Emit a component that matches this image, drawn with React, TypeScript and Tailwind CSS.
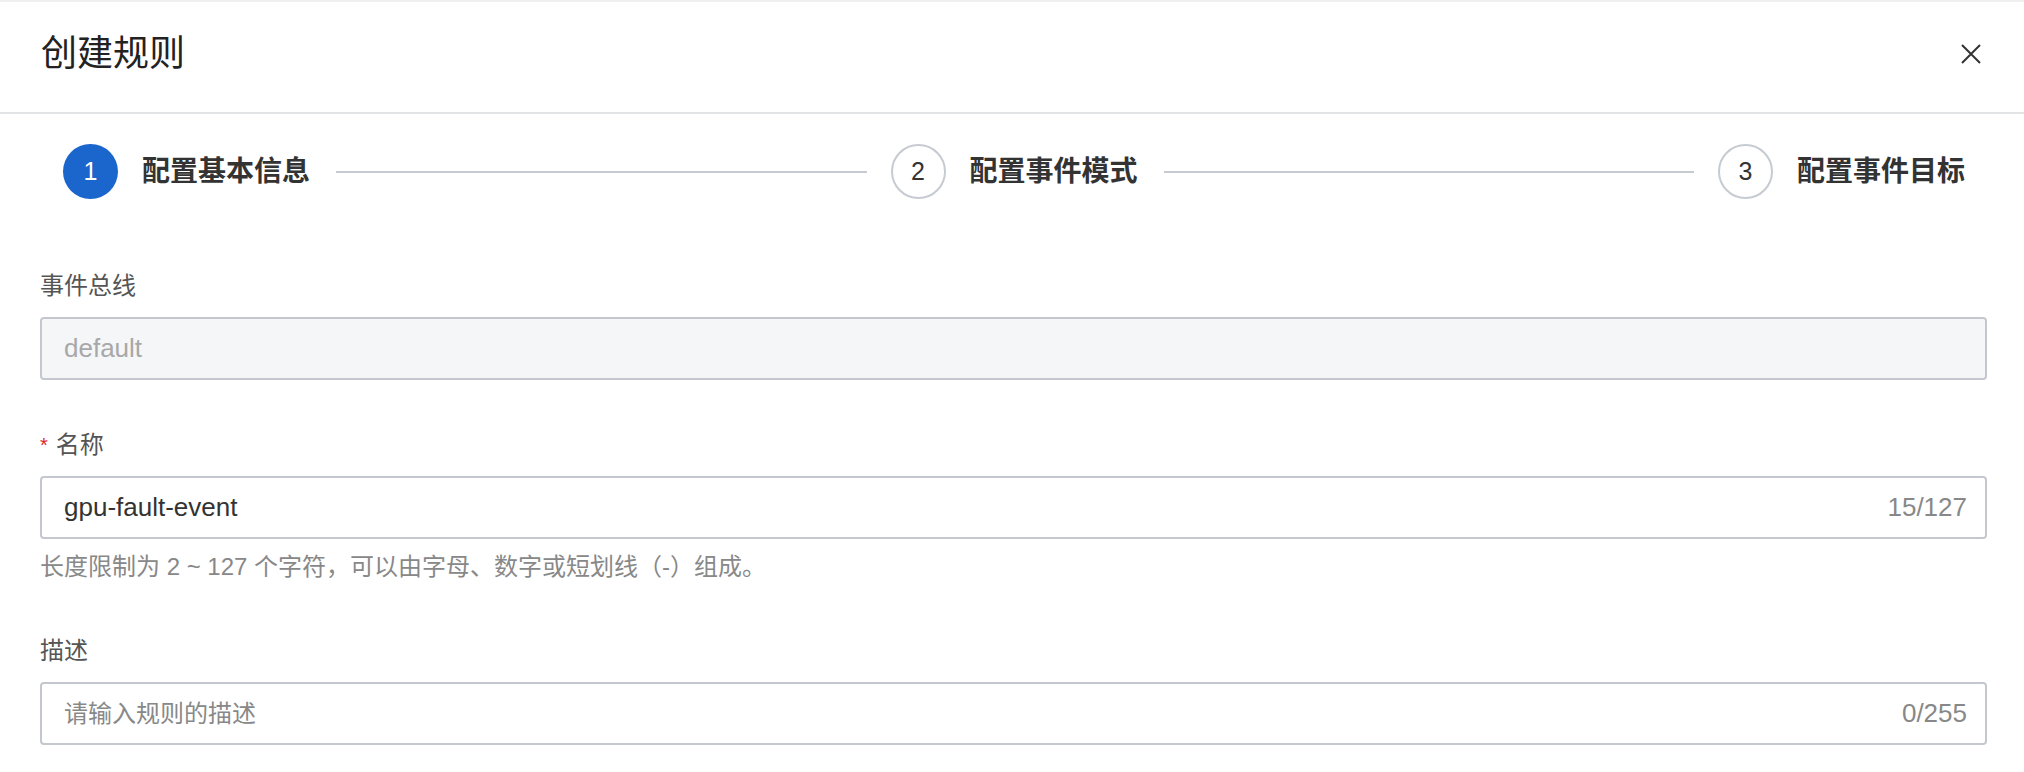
const font = "font-['Liberation_Sans','Noto_Sans_CJK_SC',sans-serif]"

const steps = [
  { n: 1, label: "配置基本信息", active: true },
  { n: 2, label: "配置事件模式", active: false },
  { n: 3, label: "配置事件目标", active: false },
]

function Step({ n, label, active }: { n: number; label: string; active: boolean }) {
  return (
    <div className="flex shrink-0 items-center gap-[24px]">
      <div
        className={`flex h-[55px] w-[55px] items-center justify-center rounded-full text-[25px] ${
          active ? "bg-[#1a66cc] text-white" : "border-2 border-[#c6cbd2] bg-white text-[#333]"
        }`}
      >
        {n}
      </div>
      <span className="text-[28px] leading-[36px] font-bold text-[#333]">{label}</span>
    </div>
  )
}

function Field({
  label,
  required,
  children,
  className,
}: {
  label: string
  required?: boolean
  children: React.ReactNode
  className?: string
}) {
  return (
    <div className={className}>
      <div className="mb-[15px] flex items-center text-[24px] leading-[32px] text-[#555]">
        {required && <span className="mr-[8px] text-[20px] text-[#d9262c]">*</span>}
        {label}
      </div>
      {children}
    </div>
  )
}

export default function App() {
  return (
    <div className={`h-[772px] w-full overflow-hidden border-t-2 border-[#efefef] bg-white ${font}`}>
      <header className="flex h-[112px] items-center justify-between border-b-2 border-[#e2e3e5] pr-[42px] pb-[6px] pl-[41px]">
        <h1 className="text-[36px] leading-[44px] text-[#222]">创建规则</h1>
        <button aria-label="关闭" className="flex h-[22px] w-[22px] items-center justify-center">
          <svg width="20" height="20" viewBox="0 0 20 20" fill="none">
            <path d="M1 1L19 19M19 1L1 19" stroke="#333" strokeWidth="2" />
          </svg>
        </button>
      </header>

      <div className="pr-[37px] pl-[40px]">
        <div className="mt-[30px] flex items-center pr-[22px] pl-[23px]">
          {steps.map((s, i) => (
            <div key={s.n} className={`flex items-center ${i < steps.length - 1 ? "flex-1" : ""}`}>
              <Step {...s} />
              {i < steps.length - 1 && (
                <div className="mr-[24px] ml-[26px] h-[2px] flex-1 bg-[#c6cbd2]" />
              )}
            </div>
          ))}
        </div>

        <Field label="事件总线" className="mt-[71px]">
          <div className="flex h-[63px] items-center rounded-[4px] border-2 border-[#c4c8ce] bg-[#f5f6f8] px-[22px] text-[26px] text-[#a8a8a8]">
            default
          </div>
        </Field>

        <Field label="名称" required className="mt-[49px]">
          <div className="flex h-[63px] items-center justify-between rounded-[4px] border-2 border-[#c4c8ce] bg-white pr-[18px] pl-[22px] text-[26px]">
            <span className="text-[#333]">gpu-fault-event</span>
            <span className="text-[#888]">15/127</span>
          </div>
          <p className="mt-[12px] text-[24px] leading-[32px] text-[#888]">
            长度限制为 2 ~ 127 个字符，可以由字母、数字或短划线（-）组成。
          </p>
        </Field>

        <Field label="描述" className="mt-[52px]">
          <div className="flex h-[63px] items-center justify-between rounded-[4px] border-2 border-[#c4c8ce] bg-white pr-[18px] pl-[22px] text-[26px]">
            <span className="text-[24px] text-[#888]">请输入规则的描述</span>
            <span className="text-[#888]">0/255</span>
          </div>
        </Field>
      </div>
    </div>
  )
}
